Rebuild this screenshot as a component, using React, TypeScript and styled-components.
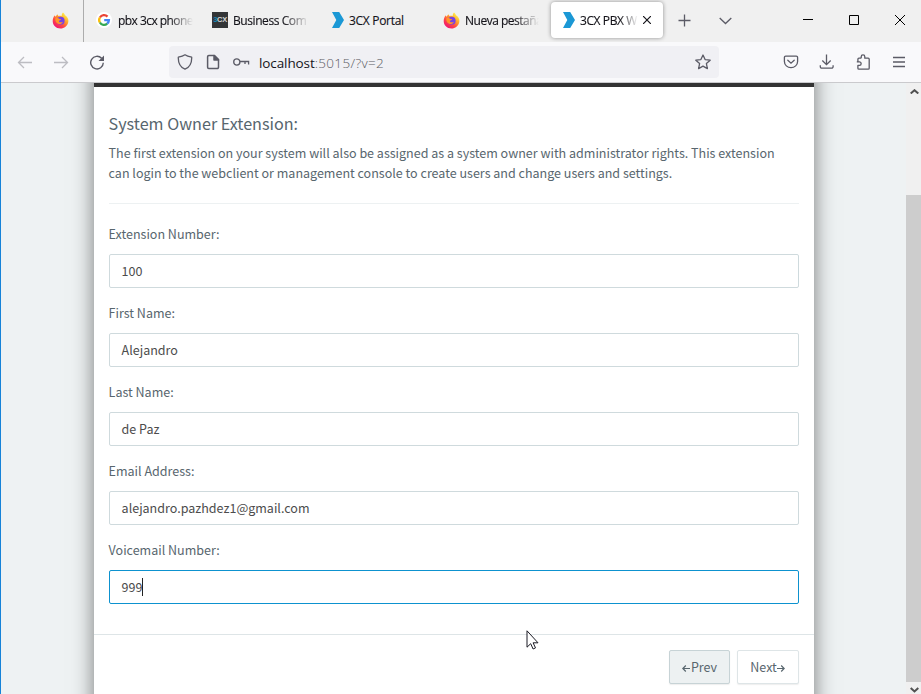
import React from 'react';
import styled, { createGlobalStyle } from 'styled-components';

const GlobalStyle = createGlobalStyle`
  * { box-sizing: border-box; }
  html, body { margin: 0; overflow: hidden; }
  svg { display: block; flex: none; }
`;

const Window = styled.div`
  position: relative;
  display: flex;
  flex-direction: column;
  width: 921px;
  height: 694px;
  overflow: hidden;
  border-left: 1px solid #1683d8;
  background: #f9f9fb;
  font-family: 'Open Sans', 'Noto Sans', sans-serif;
`;

const TabBar = styled.div`
  display: flex;
  height: 42px;
  flex: none;
  background: #f0f0f0;
`;

const PinnedTab = styled.div`
  display: flex;
  align-items: center;
  width: 83px;
  padding: 0 0 2px 51px;
  border-right: 1px solid #acacac;
`;

const Tab = styled.div<{ $width: number; $pad?: number; $gap?: number }>`
  display: flex;
  align-items: center;
  width: ${(p) => p.$width}px;
  padding: 0 0 2px ${(p) => p.$pad ?? 12}px;
  gap: ${(p) => p.$gap ?? 5}px;
`;

const ActiveTab = styled.div`
  display: flex;
  align-items: center;
  gap: 5px;
  width: 112px;
  height: 36px;
  margin: 2px 1px 0 2px;
  padding: 0 12px;
  border-radius: 4px;
  background: #fff;
  box-shadow: 0 0 4px rgba(0, 0, 0, 0.4);
`;

const TabTitle = styled.span<{ $width: number; $fade?: number; $track?: number }>`
  width: ${(p) => p.$width}px;
  flex: none;
  padding-top: 1px;
  white-space: nowrap;
  font-size: 12px;
  line-height: 18px;
  letter-spacing: ${(p) => p.$track ?? -0.3}px;
  color: #15141a;
  -webkit-text-stroke: 0.15px #15141a;
  mask-image: ${(p) =>
    p.$fade ? `linear-gradient(to left, transparent, #000 ${p.$fade}px)` : 'none'};
`;

const TabActions = styled.div`
  display: flex;
  align-items: center;
  gap: 28px;
  padding: 0 0 1px 14px;
`;

const WindowControls = styled.div`
  display: flex;
  align-items: center;
  gap: 34px;
  margin-left: auto;
  padding: 0 15px 2px 0;
`;

const Toolbar = styled.div`
  display: flex;
  align-items: center;
  height: 41px;
  flex: none;
  padding: 0 14px 0 16px;
  background: #f9f9fb;
  border-bottom: 1px solid #cacacd;
`;

const NavButtons = styled.div`
  display: flex;
  gap: 20px;
  width: 152px;
`;

const UrlBar = styled.div`
  display: flex;
  align-items: center;
  width: 550px;
  height: 32px;
  padding: 0 8px 0 8px;
  border-radius: 4px;
  background: #f0f0f4;
`;

const UrlIcons = styled.div`
  display: flex;
  gap: 12px;
`;

const Url = styled.span`
  flex: 1;
  margin: 1px 0 0 9px;
  font-size: 13.5px;
  line-height: 20px;
  letter-spacing: -0.1px;
  color: #15141a;
`;

const UrlRest = styled.span`
  letter-spacing: 0.35px;
  font-weight: 300;
  color: #5c5c63;
`;

const ToolbarActions = styled.div`
  display: flex;
  gap: 20px;
  margin-left: auto;
`;

const Viewport = styled.div`
  display: flex;
  flex: 1;
  min-height: 0;
`;

const Page = styled.div`
  flex: 1;
  overflow: hidden;
  padding-left: 93px;
  background: #eef2f3;
`;

/* The page is scrolled, so most of the dark header lies above the viewport. */
const Panel = styled.main`
  width: 720px;
  height: 690px;
  margin-top: -30px;
  border-top: 34px solid #333;
  background: #fff;
  box-shadow: 0 0 20px rgba(0, 0, 0, 0.5);
  font-family: 'Noto Sans CJK SC', sans-serif;
  font-size: 12.52px;
  line-height: 20px;
  color: #58666e;
`;

const Body = styled.section`
  height: 548px;
  padding: 26px 15px 0 14.6px;
  border-bottom: 1px solid #dee5e7;
`;

const Title = styled.h1`
  margin: 0 0 9px;
  font-size: 16.15px;
  font-weight: 400;
  line-height: 21px;
`;

const Intro = styled.p`
  width: 690px;
  height: 61px;
  margin: 0 0 20px;
  white-space: nowrap;
  border-bottom: 1px solid #edf1f2;
`;

const Field = styled.div`
  height: 79px;
`;

const Label = styled.label`
  display: block;
  margin-bottom: 10px;
`;

const InputBox = styled.div<{ $focused?: boolean }>`
  display: flex;
  align-items: center;
  height: 34px;
  padding: 0 12px;
  border: 1px solid ${(p) => (p.$focused ? '#0d92cf' : '#cfdadd')};
  border-radius: 2px;
  color: #4c4c4c;
`;

const Caret = styled.span`
  width: 1px;
  height: 18px;
  margin-left: -0.6px;
  background: #222;
`;

const Footer = styled.footer`
  display: flex;
  justify-content: flex-end;
  gap: 7px;
  padding: 15px 15px 0;
`;

const Button = styled.button<{ $width: number; $muted?: boolean }>`
  display: flex;
  align-items: center;
  justify-content: center;
  width: ${(p) => p.$width}px;
  height: 34px;
  padding: 0;
  border: 1px solid ${(p) => (p.$muted ? '#c7d3d6' : '#dee5e7')};
  border-radius: 2px;
  background: ${(p) => (p.$muted ? '#edf1f2' : '#fff')};
  box-shadow: 0 1px 1px rgba(90, 90, 90, 0.1);
  font: inherit;
  color: #58666e;
`;

const ArrowIcon = styled.svg`
  margin: 2px 0.5px 0;
  fill: none;
  stroke: #58666e;
  stroke-width: 1.2;
`;

const Scrollbar = styled.div`
  display: flex;
  flex-direction: column;
  align-items: center;
  width: 15px;
  padding: 6px 0 0 1px;
  background: #f0f0f0;
`;

const Thumb = styled.div`
  width: 15px;
  height: 487px;
  margin: 101px 0 5px -1px;
  background: #cdcdcd;
`;

const Pointer = styled.svg`
  position: absolute;
  left: 525px;
  top: 630px;
`;

const FirefoxLogo = () => (
  <svg width="17" height="17" viewBox="0 0 17 17">
    <defs>
      <linearGradient id="flame" x1="0.85" y1="0.1" x2="0.2" y2="0.95">
        <stop offset="0" stopColor="#fff44f" />
        <stop offset="0.35" stopColor="#ffa52a" />
        <stop offset="0.65" stopColor="#ff4a43" />
        <stop offset="1" stopColor="#ef1176" />
      </linearGradient>
    </defs>
    <path
      d="M11 .5c1.3 1.1 1.8 2 2 2.8.8.3 1.5 1 2 1.8C16.3 7 16.6 8.300 16.300 10c-.8 4-4 6.500-7.800 6.500C4 16.500.7 13.200.7 9c0-2.200.8-4.200 2-5.800l.5 1.500C4 3.900 4.700 3.500 5.200 2.200L6.500 4c1.500-.5 2.500-.3 3.300.1C9.500 2.700 10 1.500 11 .5z"
      fill="url(#flame)"
    />
    <circle cx="8.700" cy="8.700" r="3.900" fill="#7542e5" />
    <path d="M3.700 5.500c2 .2 2.900.8 3.800 1.500l1.700.2c-.4 1.200-1.900.8-2.300 2 .3 1.400 2.500 1.500 4 .5-.7 2.500-4.300 3.100-6.300 1C3.200 9.300 3 7.200 3.700 5.500z" fill="#ff9428" />
  </svg>
);

const GoogleLogo = () => (
  <svg width="16" height="16" viewBox="0 0 16 16" fill="none" strokeWidth="2.300">
    <circle cx="8" cy="8" r="8" fill="#fff" />
    <path d="M3.900 5.500A4.800 4.800 0 0 1 11.500 4.600" stroke="#ea4335" />
    <path d="M3.900 10.500A4.800 4.800 0 0 1 3.900 5.500" stroke="#fbbc05" />
    <path d="M11.200 11.600A4.800 4.800 0 0 1 3.900 10.500" stroke="#34a853" />
    <path d="M8.200 8.100h4.700A4.800 4.800 0 0 1 11.200 11.600" stroke="#4285f4" />
  </svg>
);

const BadgeBox = styled.span`
  display: flex;
  align-items: center;
  justify-content: center;
  width: 16px;
  height: 16px;
  background: #333537;
  font: 700 7.5px/16px 'Liberation Sans', sans-serif;
  letter-spacing: -0.3px;
  color: #d5d8da;
`;

const BadgeAccent = styled.span`
  color: #1588b5;
`;

const ChevronLogo = () => (
  <svg width="12" height="16" viewBox="0 0 12 16">
    <path d="M0 0h7.200L12 8l-4.800 8H0l4.300-8z" fill="#1b98d5" />
  </svg>
);

const stroke = { fill: 'none', stroke: '#5b5b66', strokeWidth: 1.3 } as const;

const fields = [
  { label: 'Extension Number:', value: '100' },
  { label: 'First Name:', value: 'Alejandro' },
  { label: 'Last Name:', value: 'de Paz' },
  { label: 'Email Address:', value: 'alejandro.pazhdez1@gmail.com' },
  { label: 'Voicemail Number:', value: '999', focused: true },
];

export default function App() {
  return (
    <Window>
      <GlobalStyle />
      <TabBar>
        <PinnedTab><FirefoxLogo /></PinnedTab>
        <Tab $width={116} $gap={6}>
          <GoogleLogo />
          <TabTitle $width={75} $fade={24} $track={-0.55}>pbx 3cx phone</TabTitle>
        </Tab>
        <Tab $width={120}>
          <BadgeBox><BadgeAccent>3</BadgeAccent>CX</BadgeBox>
          <TabTitle $width={76} $fade={26} $track={-0.42}>Business Com</TabTitle>
        </Tab>
        <Tab $width={111}>
          <ChevronLogo />
          <TabTitle $width={75}>3CX Portal</TabTitle>
        </Tab>
        <Tab $width={118}>
          <FirefoxLogo />
          <TabTitle $width={74} $fade={24} $track={-0.5}>Nueva pestaña</TabTitle>
        </Tab>
        <ActiveTab>
          <ChevronLogo />
          <TabTitle $width={58} $fade={18} $track={-0.4}>3CX PBX W</TabTitle>
          <svg width="8" height="8" viewBox="0 0 8 8" fill="none" stroke="#15141a" strokeWidth="1.200">
            <path d="M0 0l8 8M8 0L0 8" />
          </svg>
        </ActiveTab>
        <TabActions>
          <svg width="13" height="13" viewBox="0 0 13 13" {...stroke}><path d="M6.500 .5v12M.5 6.500h12" /></svg>
          <svg width="13" height="8" viewBox="0 0 13 8" {...stroke}><path d="M.7 1l5.800 5.500L12.300 1" /></svg>
        </TabActions>
        <WindowControls>
          <svg width="12" height="12" viewBox="0 0 12 12"><path d="M1 5h10v1H1z" /></svg>
          <svg width="12" height="12" viewBox="0 0 12 12" fill="none" stroke="#000"><path d="M1.500 1.500h9v9h-9z" /></svg>
          <svg width="12" height="12" viewBox="0 0 12 12" fill="none" stroke="#000"><path d="M1 1l10 10M11 1L1 11" /></svg>
        </WindowControls>
      </TabBar>

      <Toolbar>
        <NavButtons>
          <svg width="16" height="16" viewBox="0 0 16 16" fill="none" stroke="#bdbdc2" strokeWidth="1.300"><path d="M15 8.500H1.500M7 3L1.500 8.500 7 14" /></svg>
          <svg width="16" height="16" viewBox="0 0 16 16" fill="none" stroke="#bdbdc2" strokeWidth="1.300"><path d="M1 8.500h13.500M9 3L14.500 8.500 9 14" /></svg>
          <svg width="16" height="16" viewBox="0 0 16 16" {...stroke} strokeWidth="1.400">
            <path d="M14.300 8.800A6.300 6.300 0 1 1 12.600 4.300" />
            <path d="M15 1.500v5.400H9.500z" fill="#5b5b66" stroke="none" />
          </svg>
        </NavButtons>
        <UrlBar>
          <UrlIcons>
            <svg width="16" height="16" viewBox="0 0 16 16" {...stroke} strokeLinejoin="round">
              <path d="M8 .8C6.200 2.200 3.800 2.800 1.300 3.200c-.2 5.800 1.800 9.900 6.700 12 4.900-2.100 6.900-6.200 6.700-12C12.200 2.800 9.800 2.200 8 .8z" />
            </svg>
            <svg width="16" height="16" viewBox="0 0 16 16" {...stroke} strokeWidth="1.500" strokeLinejoin="round">
              <path d="M3.800 1.500h5.700l4 4v7.800a1.200 1.200 0 0 1-1.200 1.200H3.800a1.200 1.200 0 0 1-1.200-1.200V2.700a1.200 1.200 0 0 1 1.200-1.200z" />
              <path d="M9 1.500V6h4.500z" fill="#5b5b66" />
            </svg>
            <svg width="17" height="16" viewBox="0 0 17 16" {...stroke}>
              <circle cx="3.800" cy="8" r="3.100" />
              <path d="M6.900 7.500H15.600v3M12 7.500v2.500" />
            </svg>
          </UrlIcons>
          <Url>localhost<UrlRest>:5015/?v=2</UrlRest></Url>
          <svg width="16" height="16" viewBox="0 0 16 16" {...stroke} strokeLinejoin="round">
            <path d="M8 1l2.100 4.600 5.100.6-3.800 3.400 1 5L8 12.100l-4.400 2.500 1-5L.8 6.200l5.100-.6z" />
          </svg>
        </UrlBar>
        <ToolbarActions>
          <svg width="16" height="16" viewBox="0 0 16 16" {...stroke} strokeLinecap="round">
            <path d="M2.700 2.200h10.600a1.300 1.300 0 0 1 1.300 1.300v4a6.600 6.200 0 0 1-13.200 0v-4a1.300 1.300 0 0 1 1.300-1.300z" />
            <path d="M4.800 6.200L8 9.200l3.200-3" />
          </svg>
          <svg width="16" height="16" viewBox="0 0 16 16" {...stroke}>
            <path d="M7.500 .5v10M3.300 6.500L7.500 10.700l4.200-4.200M1.300 11.200v1.500a1.500 1.500 0 0 0 1.500 1.500h9.800a1.500 1.500 0 0 0 1.500-1.500v-1.500" />
          </svg>
          <svg width="16" height="16" viewBox="0 0 16 16" {...stroke} strokeLinejoin="round">
            <path d="M6.200 4.200V2.700a1.800 1.800 0 0 1 3.600 0v1.500h3.400a1 1 0 0 1 1 1v9a1 1 0 0 1-1 1H3.900a1 1 0 0 1-1-1v-2.800h1.500a1.700 1.700 0 0 0 0-3.500H1.800M6.200 4.200H3.900a1 1 0 0 0-1 1v2.700" />
          </svg>
          <svg width="16" height="16" viewBox="0 0 16 16" {...stroke}><path d="M2 3.500h12M2 8h12M2 12.500h12" /></svg>
        </ToolbarActions>
      </Toolbar>

      <Viewport>
        <Page>
          <Panel>
            <Body>
              <Title>System Owner Extension:</Title>
              <Intro>
                The first extension on your system will also be assigned as a system owner with administrator rights. This extension<br />
                can login to the webclient or management console to create users and change users and settings.
              </Intro>
              {fields.map((f) => (
                <Field key={f.label}>
                  <Label>{f.label}</Label>
                  <InputBox $focused={f.focused}>
                    {f.value}
                    {f.focused && <Caret />}
                  </InputBox>
                </Field>
              ))}
            </Body>
            <Footer>
              <Button $width={61} $muted>
                <ArrowIcon width="8" height="7" viewBox="0 0 8 7"><path d="M8 3.500H1M3.800 .5L.8 3.500l3 3" /></ArrowIcon>
                Prev
              </Button>
              <Button $width={62}>
                Next
                <ArrowIcon width="8" height="7" viewBox="0 0 8 7"><path d="M0 3.500h7M4.200 .5l3 3-3 3" /></ArrowIcon>
              </Button>
            </Footer>
          </Panel>
        </Page>
        <Scrollbar>
          <svg width="9" height="5" viewBox="0 0 9 5" fill="none" stroke="#505050" strokeWidth="2"><path d="M.7 4.500l3.800-3.300 3.800 3.300" /></svg>
          <Thumb />
          <svg width="9" height="7" viewBox="0 0 9 7" fill="none" stroke="#505050" strokeWidth="2"><path d="M.7 1l3.800 3.500L8.300 1" /></svg>
        </Scrollbar>
      </Viewport>

      <Pointer width="13" height="20" viewBox="0 0 13 20">
        <path d="M1 .8v16.400l3.700-3.500 2.400 5.300 2.400-1.100-2.400-5.100h4.900z" fill="#fff" stroke="#1a1a24" strokeWidth="1" />
      </Pointer>
    </Window>
  );
}
